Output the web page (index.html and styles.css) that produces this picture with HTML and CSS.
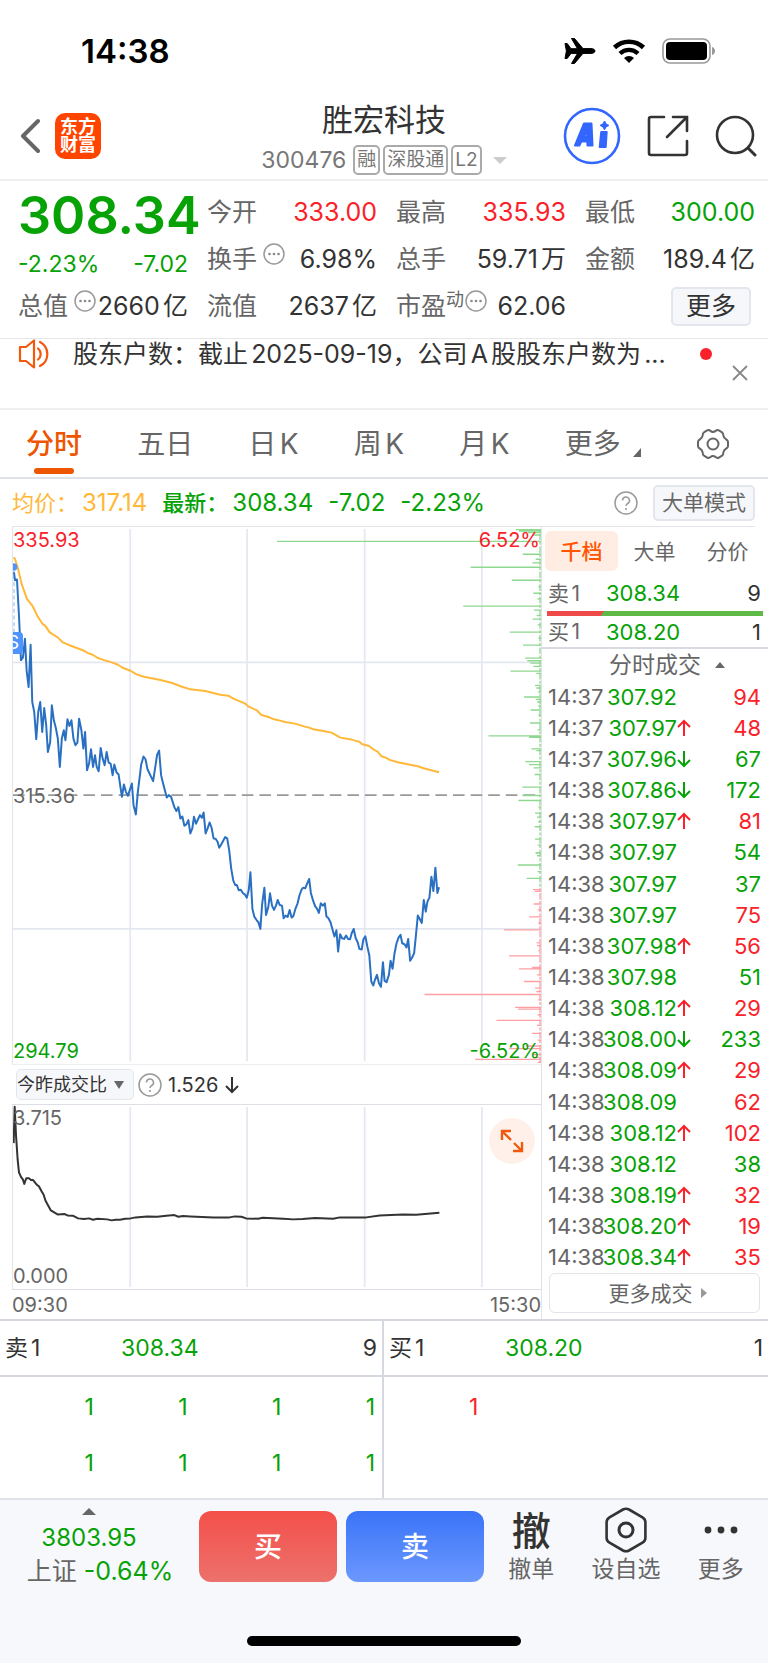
FILE: index.html
```html
<!DOCTYPE html>
<html lang="zh-CN">
<head>
  <meta charset="utf-8">
  <meta name="viewport" content="width=device-width, initial-scale=1">
  <title>胜宏科技 300476</title>
  <link rel="stylesheet" href="styles.css">
</head>
<body>
  <!-- shared icons -->
  <svg class="defs" width="0" height="0">
    <symbol id="i-up" viewBox="0 0 14 18"><path d="M7 17V2M1 8L7 2l6 6" fill="none" stroke="currentColor" stroke-width="2"/></symbol>
    <symbol id="i-down" viewBox="0 0 14 18"><path d="M7 1v15M1 10l6 6 6-6" fill="none" stroke="currentColor" stroke-width="2"/></symbol>
    <symbol id="i-more" viewBox="0 0 22 22"><circle cx="11" cy="11" r="10" fill="none" stroke="#999" stroke-width="1.500"/><g fill="#888"><circle cx="6.500" cy="11" r="1.300"/><circle cx="11" cy="11" r="1.300"/><circle cx="15.500" cy="11" r="1.300"/></g></symbol>
    <symbol id="i-help" viewBox="0 0 24 24"><circle cx="12" cy="12" r="11" fill="none" stroke="#999" stroke-width="1.500"/><path d="M8.500 9.500a3.500 3.500 0 1 1 5.200 3c-1.200.7-1.700 1.200-1.700 2.500" fill="none" stroke="#999" stroke-width="1.500"/><circle cx="12" cy="18" r="1.100" fill="#999"/></symbol>
  </svg>

  <div class="status-bar">
    <div class="time">14:38</div>
    <div class="status-icons">
      <svg width="32" height="28" viewBox="0 0 32 28"><path d="M1 6.500h2.200l3.800 5.200h6.500L7.500 1.500h3L19 11.600h8c2.500 0 4 1.200 4 2.400s-1.500 2.400-4 2.400h-8L10.500 26.500h-3l6-10.100H7l-3.800 5.100H1l1.400-7.500z" stroke="#000"/></svg>
      <svg width="34" height="26" viewBox="0 0 34 26"><path d="M2.500 9.500a21 21 0 0 1 29 0" fill="none" stroke="#000" stroke-width="4.600"/><path d="M8 15.500a13 13 0 0 1 18 0" fill="none" stroke="#000" stroke-width="4.400"/><path d="M17 25l-5-5a7 7 0 0 1 10 0z"/></svg>
      <svg class="battery" width="54" height="26" viewBox="0 0 54 26"><rect x="1" y="1" width="47" height="24" rx="7" fill="none" stroke="#999" stroke-width="1.600"/><rect x="4" y="4" width="41" height="18" rx="4"/><path d="M50 9c4 1 4 7 0 8z" fill="#999"/></svg>
    </div>
  </div>

  <header class="header">
    <div class="header-left">
      <button class="icon-btn" aria-label="返回">
        <svg width="20" height="36" viewBox="0 0 20 36"><path d="M18 3L3 18l15 15" fill="none" stroke="#666" stroke-width="4" stroke-linecap="round" stroke-linejoin="round"/></svg>
      </button>
      <a class="brand" href="#">东方<br>财富</a>
    </div>
    <div class="header-title">
      <h1>胜宏科技</h1>
      <div class="code-row">
        <span class="code">300476</span>
        <span class="tag">融</span>
        <span class="tag">深股通</span>
        <span class="tag">L2</span>
        <span class="caret"></span>
      </div>
    </div>
    <div class="header-right">
      <button class="icon-btn" aria-label="Ai">
        <svg width="58" height="58" viewBox="0 0 58 58">
          <circle cx="29" cy="29" r="27" fill="none" stroke="#3366ff" stroke-width="2.600"/>
          <path fill="#3366ff" fill-rule="evenodd" stroke="#3366ff" stroke-width="2" stroke-linejoin="round" d="M21 16.500h7.500l1 22h-5l-.2-4h-6.100l-1.800 4h-4.400zM20.800 29.500h3.600l-.3-6zM38.200 25h5.500l-1 15h-6zM41.500 15l1.100 2.300 2.400 1.100-2.400 1.100-1.100 2.400-1.200-2.400-2.300-1.100 2.300-1.100z"/>
        </svg>
      </button>
      <button class="icon-btn" aria-label="分享">
        <svg width="42" height="42" viewBox="0 0 42 42"><path d="M17 2H4a2 2 0 0 0-2 2v34a2 2 0 0 0 2 2h34a2 2 0 0 0 2-2V26M26 2h14v14M39 3L20 22" fill="none" stroke="#333" stroke-width="2.600" stroke-linecap="round"/></svg>
      </button>
      <button class="icon-btn" aria-label="搜索">
        <svg width="42" height="42" viewBox="0 0 42 42"><circle cx="20" cy="20" r="18" fill="none" stroke="#333" stroke-width="2.600"/><path d="M33 33l7 7" stroke="#333" stroke-width="3" stroke-linecap="round"/></svg>
      </button>
    </div>
  </header>

  <section class="quote">
    <div class="quote-main">
      <div class="price green">308.34</div>
      <div class="change green"><span>-2.23%</span><span>-7.02</span></div>
      <div class="stat"><span class="label">总值<svg class="more-dot"><use href="#i-more"/></svg></span><span>2660亿</span></div>
    </div>
    <div class="quote-col">
      <div class="stat"><span class="label">今开</span><span class="red">333.00</span></div>
      <div class="stat"><span class="label">换手<svg class="more-dot"><use href="#i-more"/></svg></span><span>6.98%</span></div>
      <div class="stat"><span class="label">流值</span><span>2637亿</span></div>
    </div>
    <div class="quote-col">
      <div class="stat"><span class="label">最高</span><span class="red">335.93</span></div>
      <div class="stat"><span class="label">总手</span><span>59.71万</span></div>
      <div class="stat"><span class="label">市盈<small>动</small><svg class="more-dot tight"><use href="#i-more"/></svg></span><span>62.06</span></div>
    </div>
    <div class="quote-col">
      <div class="stat"><span class="label">最低</span><span class="green">300.00</span></div>
      <div class="stat"><span class="label">金额</span><span>189.4亿</span></div>
      <div class="stat end"><button class="soft-btn more-btn">更多</button></div>
    </div>
  </section>

  <section class="news">
    <svg class="speaker" width="34" height="30" viewBox="0 0 34 30"><g fill="none" stroke="#f2590d" stroke-width="2.200" stroke-linejoin="round" stroke-linecap="round"><path d="M2 8h6l8-6.500v27L8 22H2z"/><path d="M20 9.500a7 7 0 0 1 0 11M22 3a13.500 13.500 0 0 1 0 24"/></g></svg>
    <a class="news-text" href="#">股东户数：截止2025-09-19，公司A股股东户数为...</a>
    <span class="dot"></span>
    <button class="icon-btn close" aria-label="关闭">
      <svg width="16" height="16" viewBox="0 0 16 16"><path d="M1 1l14 14M15 1L1 15" stroke="#888" stroke-width="1.800"/></svg>
    </button>
  </section>

  <nav class="tabs">
    <a class="active" href="#">分时</a>
    <a href="#">五日</a>
    <a href="#">日K</a>
    <a href="#">周K</a>
    <a href="#">月K</a>
    <a class="has-corner" href="#">更多</a>
    <button class="icon-btn" aria-label="设置">
      <svg width="34" height="32" viewBox="0 0 34 32"><g fill="none" stroke="#666" stroke-width="2"><path d="M11 2.500q2-1 3.300.4 2.700 2 5.400 0Q21 1.500 23 2.500l3 1.800q1.500 1 1.300 3 .5 3 3 4.200 1.700.8 1.700 2.500v4q0 1.700-1.700 2.500-2.500 1.200-3 4.200.2 2-1.300 3l-3 1.800q-2 1-3.300-.4-2.700-2-5.400 0-1.300 1.400-3.300.4l-3-1.800q-1.500-1-1.300-3-.5-3-3-4.200Q2 19.700 2 18v-4q0-1.700 1.700-2.500 2.500-1.200 3-4.200-.2-2 1.300-3z"/><circle cx="17" cy="16" r="5.500"/></g></svg>
    </button>
  </nav>

  <div class="summary">
    <span class="avg">均价：<span class="num">317.14</span></span>
    <span class="green"><b>最新：</b><span class="num">308.34</span></span>
    <span class="num green">-7.02</span>
    <span class="num green">-2.23%</span>
    <button class="icon-btn help" aria-label="帮助"><svg width="24" height="24"><use href="#i-help"/></svg></button>
    <button class="soft-btn mode-btn">大单模式</button>
  </div>

  <main class="market">
    <div class="charts">
      <div class="chart price-chart">
        <svg viewBox="36 24 1590 1614" preserveAspectRatio="none">
          <path class="grid" d="M389 30V1630M741 30V1630M1095 30V1630M1448 30V1630M36 431H1626M36 1232H1626"/>
          <path class="mid" d="M36 830H1626"/>
          <!-- resting sell orders -->
          <g transform="translate(1320 0)">
            <path class="asks" d="M230 32H306M240 36H306M265 41H306M280 48H306M-489 67H306M251 106H306M290 121H306M280 132H306M94 145H306M218 184H306M298 203H306M283 223H306M295 240H306M72 262H306M285 274H306M293 290H306M281 301H306M296 318H306M212 340H306M298 358H306M252 379H306M258 418H306M265 426H306M274 433H306M283 443H306M214 457H306M292 464H306M288 500H306M292 508H306M298 520H306M255 535H306M290 542H306M294 550H306M298 562H306M275 574H306M298 590H306M273 613H306M296 634H306M148 652H306M270 656H306M277 691H306M292 696H306M259 729H306M270 738H306M284 748H306M287 768H306M250 806H306M250 831H306M238 846H306M298 866H306M288 884H306M294 896H306M298 910H306M287 925H306M288 962H306M296 980H306M290 1003H306M294 1012H306"/>
            <path class="asks edge" d="M303 30V1020"/>
          </g>
          <!-- resting buy orders -->
          <g transform="translate(1200 960)">
            <path class="asks" d="M410 43H426M356 80H426M416 100H426M383 120H426"/>
            <path class="asks edge" d="M423 60V145"/>
            <path class="bids" d="M402 154H426M408 159H426M404 197H426M416 215H426M390 236H426M418 255H426M315 275H426M413 314H426M414 322H426M418 338H426M330 353H426M399 388H426M360 392H426M414 410H426M375 430H426M408 450H426M412 460H426M75 469H426M418 485H426M348 508H426M357 513H426M416 530H426M292 547H426M414 562H426M399 586H426M416 606H426M380 624H426M330 632H426M400 650H426M410 658H426M228 664H426M416 673H426"/>
            <path class="bids edge" d="M423 150V675"/>
          </g>
          <polyline class="avg-line" points="38,115 42,120 50,145 62,195 78,240 94,260 110,292 124,314 134,322 146,340 158,348 170,355 186,371 210,381 250,396 262,403 276,408 290,417 310,424 334,431 352,438 366,447 390,456 408,467 430,474 480,484 515,493 545,504 570,512 615,517 660,528 684,531 700,540 734,554 746,564 770,575 784,589 808,596 822,602 840,606 855,610 885,615 915,624 928,627 940,632 970,637 995,642 1022,657 1055,663 1078,669 1088,677 1108,682 1122,693 1134,699 1145,713 1160,718 1170,724 1198,732 1255,743 1275,750 1319,761"/>
          <path class="marker-line" d="M39 150V340"/>
          <circle cx="38" cy="144" r="11" fill="#4d94ff"/>
          <polyline class="price-line" points="39,160 42,184 48,182 54,290 60,424 66,416 72,360 77,455 83,505 89,378 94,550 100,580 106,662 112,580 118,550 124,640 130,568 136,620 141,700 148,670 153,560 159,605 165,628 171,660 177,745 183,660 189,635 194,665 200,602 206,622 212,605 218,660 224,680 230,672 235,600 242,635 248,690 253,640 259,755 265,735 271,692 277,745 283,710 288,745 294,758 300,688 306,720 312,740 318,700 324,732 330,735 336,770 341,738 348,762 354,768 364,835 370,798 376,820 382,832 394,795 399,860 406,888 412,820 422,738 429,714 435,722 441,752 458,788 463,755 470,708 476,696 482,770 488,795 499,837 505,830 512,835 522,866 528,878 534,866 540,900 546,894 552,922 558,918 564,905 570,945 576,930 581,895 587,916 599,890 605,898 610,882 616,945 622,930 628,912 634,928 640,960 646,961 652,970 657,988 663,978 675,956 681,960 687,995 693,1050 699,1085 705,1100 710,1100 716,1116 722,1114 728,1124 734,1128 740,1138 746,1115 751,1062 757,1172 763,1196 770,1206 775,1212 781,1232 786,1160 793,1108 798,1190 805,1165 810,1125 816,1162 822,1175 828,1162 833,1145 839,1160 846,1162 851,1200 857,1192 863,1196 869,1175 875,1198 880,1194 887,1170 893,1155 899,1130 905,1114 910,1108 916,1110 922,1095 928,1082 933,1124 940,1148 946,1164 951,1170 957,1184 963,1155 969,1162 975,1155 980,1195 986,1200 992,1212 1004,1255 1010,1236 1015,1300 1021,1248 1027,1260 1033,1262 1039,1252 1045,1262 1051,1263 1056,1245 1062,1232 1068,1260 1074,1272 1079,1292 1086,1294 1091,1264 1097,1254 1103,1285 1109,1312 1115,1390 1121,1402 1126,1385 1132,1370 1138,1395 1144,1406 1150,1332 1155,1388 1161,1392 1168,1370 1173,1328 1179,1352 1185,1305 1191,1275 1197,1258 1203,1250 1208,1275 1215,1278 1221,1288 1226,1262 1232,1328 1238,1318 1244,1305 1249,1255 1255,1192 1261,1202 1267,1214 1273,1145 1279,1180 1284,1150 1290,1138 1296,1075 1302,1118 1308,1048 1314,1124 1319,1107"/>
        </svg>
        <span class="trade-mark">S</span>
        <span class="axis top left red">335.93</span>
        <span class="axis top right red">6.52%</span>
        <span class="axis middle left">315.36</span>
        <span class="axis bottom left green">294.79</span>
        <span class="axis bottom right green">-6.52%</span>
      </div>

      <div class="indicator">
        <button class="soft-btn indicator-btn">今昨成交比<span class="tri-down"></span></button>
        <button class="icon-btn" aria-label="帮助"><svg width="24" height="24"><use href="#i-help"/></svg></button>
        <span class="indicator-value">1.526 <svg class="arrow"><use href="#i-down"/></svg></span>
      </div>

      <div class="chart ratio-chart">
        <svg viewBox="36 195 1590 555" preserveAspectRatio="none">
          <path class="grid" d="M389 201V744M741 201V744M1095 201V744M1448 201V744"/>
          <polyline class="ratio-line" points="38,310 41,200 45,285 50,360 54,398 60,412 66,420 70,433 76,416 84,416 90,421 96,421 108,436 114,440 122,455 128,465 134,484 150,513 160,519 170,525 192,524 200,528 216,529 232,537 250,539 265,537 277,541 290,538 320,540 333,543 345,541 358,541 374,538 390,537 405,534 440,531 470,532 498,529 522,527 534,532 548,530 570,531 640,534 688,534 704,531 724,532 738,537 774,538 788,535 850,538 880,540 908,539 946,536 1000,538 1020,534 1100,534 1140,528 1210,525 1250,526 1320,520"/>
        </svg>
        <span class="axis top left">3.715</span>
        <span class="axis bottom left">0.000</span>
        <button class="icon-btn expand" aria-label="全屏">
          <svg width="24" height="24" viewBox="0 0 24 24"><path d="M2 11V2h9M2 2l9 9M22 13v9h-9M22 22l-8-8" fill="none" stroke="#f2590d" stroke-width="2.400"/></svg>
        </button>
      </div>
      <div class="hours"><span>09:30</span><span>15:30</span></div>
    </div>

    <aside class="tape">
      <div class="tape-tabs">
        <button class="active">千档</button>
        <button>大单</button>
        <button>分价</button>
      </div>
      <div class="level"><span>卖1</span><b class="green">308.34</b><i>9</i></div>
      <div class="ratio-bar"></div>
      <div class="level"><span>买1</span><b class="green">308.20</b><i>1</i></div>
      <button class="tape-title">分时成交<span class="tri-up"></span></button>
      <table class="trades">
        <tr><td>14:37</td><td>307.92</td><td></td><td class="red">94</td></tr>
        <tr><td>14:37</td><td>307.97</td><td class="red"><svg class="arrow"><use href="#i-up"/></svg></td><td class="red">48</td></tr>
        <tr><td>14:37</td><td>307.96</td><td class="green"><svg class="arrow"><use href="#i-down"/></svg></td><td class="green">67</td></tr>
        <tr><td>14:38</td><td>307.86</td><td class="green"><svg class="arrow"><use href="#i-down"/></svg></td><td class="green">172</td></tr>
        <tr><td>14:38</td><td>307.97</td><td class="red"><svg class="arrow"><use href="#i-up"/></svg></td><td class="red">81</td></tr>
        <tr><td>14:38</td><td>307.97</td><td></td><td class="green">54</td></tr>
        <tr><td>14:38</td><td>307.97</td><td></td><td class="green">37</td></tr>
        <tr><td>14:38</td><td>307.97</td><td></td><td class="red">75</td></tr>
        <tr><td>14:38</td><td>307.98</td><td class="red"><svg class="arrow"><use href="#i-up"/></svg></td><td class="red">56</td></tr>
        <tr><td>14:38</td><td>307.98</td><td></td><td class="green">51</td></tr>
        <tr><td>14:38</td><td>308.12</td><td class="red"><svg class="arrow"><use href="#i-up"/></svg></td><td class="red">29</td></tr>
        <tr><td>14:38</td><td>308.00</td><td class="green"><svg class="arrow"><use href="#i-down"/></svg></td><td class="green">233</td></tr>
        <tr><td>14:38</td><td>308.09</td><td class="red"><svg class="arrow"><use href="#i-up"/></svg></td><td class="red">29</td></tr>
        <tr><td>14:38</td><td>308.09</td><td></td><td class="red">62</td></tr>
        <tr><td>14:38</td><td>308.12</td><td class="red"><svg class="arrow"><use href="#i-up"/></svg></td><td class="red">102</td></tr>
        <tr><td>14:38</td><td>308.12</td><td></td><td class="green">38</td></tr>
        <tr><td>14:38</td><td>308.19</td><td class="red"><svg class="arrow"><use href="#i-up"/></svg></td><td class="red">32</td></tr>
        <tr><td>14:38</td><td>308.20</td><td class="red"><svg class="arrow"><use href="#i-up"/></svg></td><td class="red">19</td></tr>
        <tr><td>14:38</td><td>308.34</td><td class="red"><svg class="arrow"><use href="#i-up"/></svg></td><td class="red">35</td></tr>
      </table>
      <button class="more-trades">更多成交<span class="tri-right"></span></button>
    </aside>
  </main>

  <section class="book">
    <div class="book-side">
      <div class="book-head"><span>卖1</span><span class="green">308.34</span><span>9</span></div>
      <div class="queue green">
        <span>1</span><span>1</span><span>1</span><span>1</span>
        <span>1</span><span>1</span><span>1</span><span>1</span>
      </div>
    </div>
    <div class="book-side">
      <div class="book-head"><span>买1</span><span class="green">308.20</span><span>1</span></div>
      <div class="queue red"><span>1</span></div>
    </div>
  </section>

  <footer class="bottom-bar">
    <div class="actions">
      <a class="index" href="#">
        <span class="tri-up"></span>
        <span class="index-value green">3803.95</span>
        <span class="index-change">上证 <span class="green">-0.64%</span></span>
      </a>
      <div class="trade-btns">
        <button class="buy">买</button>
        <button class="sell">卖</button>
      </div>
      <div class="shortcuts">
        <a href="#"><span class="glyph">撤</span>撤单</a>
        <a href="#">
          <span class="glyph"><svg width="44" height="46" viewBox="0 0 44 46"><g fill="none" stroke="#333"><path d="M19 2.500q3-1.600 6 0l13.500 7.800q2.900 1.700 2.900 5v15.400q0 3.300-2.900 5L25 43.500q-3 1.600-6 0L5.500 35.700q-2.900-1.700-2.900-5V15.300q0-3.300 2.900-5z" stroke-width="2.600"/><circle cx="22" cy="23" r="7" stroke-width="3"/></g></svg></span>设自选
        </a>
        <a href="#">
          <span class="glyph"><svg width="34" height="8" viewBox="0 0 34 8"><g fill="#333"><circle cx="4" cy="4" r="3.400"/><circle cx="17" cy="4" r="3.400"/><circle cx="30" cy="4" r="3.400"/></g></svg></span>更多
        </a>
      </div>
    </div>
    <div class="home-indicator"></div>
  </footer>
</body>
</html>
```
FILE: styles.css
```css
* {
  box-sizing: border-box;
}
body {
  margin: 0;
  background: #fff;
  color: #333;
  font-family: Inter, "Noto Sans CJK SC", sans-serif;
  font-size: 22px;
  line-height: 1;
  text-autospace: normal;
}
a {
  color: inherit;
  text-decoration: none;
}
button {
  font: inherit;
  color: inherit;
  background: none;
  border: none;
  padding: 0;
  cursor: pointer;
}
svg {
  display: block;
}
.defs {
  position: absolute;
}
.red {
  color: #f9222a;
}
.green {
  color: #06a206;
}
.icon-btn {
  display: flex;
  align-items: center;
  justify-content: center;
}
.soft-btn {
  border: 2px solid #e4e6ee;
  border-radius: 5px;
  background: #f6f7fa;
}

/* status bar */
.status-bar {
  display: flex;
  justify-content: space-between;
  align-items: center;
  height: 102px;
  padding: 0 52px 0 81px;
  color: #000;
}
.time {
  font-size: 33px;
  font-weight: 600;
}
.status-icons {
  display: flex;
  align-items: center;
  gap: 16px;
}

/* header */
.header {
  display: grid;
  grid-template-columns: 1fr auto 1fr;
  height: 79px;
  padding: 0 11px;
  border-bottom: 2px solid #efefef;
}
.header-left,
.header-right {
  display: flex;
  align-items: center;
  padding-bottom: 10px;
}
.header-left {
  gap: 15px;
  padding-left: 9px;
}
.header-right {
  justify-content: flex-end;
  gap: 26px;
}
.brand {
  padding: 5px;
  border-radius: 10px;
  background: #ff4400;
  color: #fff;
  font-size: 18px;
  font-weight: 700;
  line-height: 18px;
}
.header-title {
  text-align: center;
}
.header-title h1 {
  margin: 0 0 8px;
  font-size: 31px;
  font-weight: 400;
  line-height: 35px;
}
.code-row {
  display: flex;
  align-items: center;
  justify-content: center;
  gap: 3px;
  color: #777;
}
.code {
  margin-right: 4px;
  font-size: 23px;
}
.tag {
  padding: 0 2px;
  border: 2px solid #aaa;
  border-radius: 5px;
  font-size: 19px;
  line-height: 26px;
}
.caret {
  margin-left: 8px;
  border: 7px solid transparent;
  border-top-color: #ccc;
  border-bottom: none;
}

/* quote */
.quote {
  display: grid;
  grid-template-columns: repeat(4, minmax(0, 1fr));
  gap: 19px;
  height: 158px;
  padding: 8px 13px 0 18px;
  border-bottom: 1px solid #e6e6e6;
  font-size: 25px;
}
.stat {
  display: flex;
  justify-content: space-between;
  align-items: center;
  height: 47px;
  white-space: nowrap;
}
.stat.end {
  justify-content: flex-end;
}
.label {
  display: flex;
  color: #666;
}
.label small {
  font-size: 18px;
  line-height: 12px;
}
.more-dot {
  width: 22px;
  height: 22px;
  margin: -4px 0 0 6px;
}
.more-dot.tight {
  margin-left: 1px;
}
.price {
  height: 56px;
  font-size: 52px;
  font-weight: 600;
  line-height: 54px;
}
.change {
  display: flex;
  justify-content: space-between;
  align-items: center;
  height: 38px;
  font-size: 23px;
}
.more-btn {
  width: 80px;
  height: 39px;
  margin-right: 4px;
}

/* announcement */
.news {
  display: flex;
  align-items: flex-start;
  height: 71px;
  padding: 0 20px 0 18px;
  border-bottom: 2px solid #efefef;
}
.news-text {
  flex: 1;
  margin-left: 21px;
  font-size: 25px;
  line-height: 30px;
  white-space: nowrap;
}
.dot {
  width: 12px;
  height: 12px;
  margin: 9px 20px 0 0;
  border-radius: 50%;
  background: #f9222a;
}
.close {
  margin-top: 26px;
}

/* period tabs */
.tabs {
  display: flex;
  justify-content: space-between;
  align-items: center;
  height: 69px;
  padding: 0 38px 0 26px;
  border-bottom: 2px solid #dfe1e8;
  color: #666;
  font-size: 28px;
}
.tabs a {
  position: relative;
  line-height: 66px;
}
.tabs .active {
  color: #ee5500;
  font-weight: 500;
}
.tabs .active::after {
  content: "";
  position: absolute;
  left: 50%;
  bottom: 3px;
  width: 40px;
  height: 6px;
  margin-left: -20px;
  border-radius: 3px;
  background: #ee5500;
}
.tabs .has-corner {
  padding-right: 20px;
}
.has-corner::after {
  content: "";
  position: absolute;
  right: 0;
  bottom: 20px;
  border-left: 8px solid transparent;
  border-bottom: 9px solid #666;
}

/* summary line */
.summary {
  display: flex;
  align-items: center;
  gap: 15px;
  height: 48px;
  margin: 0 13px 0 12px;
  border-bottom: 1px solid #e2e4e8;
}
.avg {
  color: #ffb838;
}
.summary b {
  font-weight: 500;
}
.num {
  font-size: 24px;
}
span > .num {
  margin-left: 4px;
}
.help {
  margin-left: auto;
}
.mode-btn {
  width: 102px;
  height: 36px;
  color: #666;
  font-size: 21px;
}

/* charts */
.market {
  display: grid;
  grid-template-columns: minmax(0, 1fr) 226px;
  border-bottom: 2px solid #d6d8e0;
}
.charts {
  margin-left: 12px;
  border-right: 1px solid #e0e2e8;
}
.chart {
  position: relative;
  overflow: hidden;
  border-left: 1px solid #e2e4ec;
}
.chart > svg {
  width: 100%;
  height: 100%;
}
.price-chart {
  height: 538px;
  border-bottom: 1px solid #eceef2;
}
.ratio-chart {
  height: 186px;
  border-top: 1px solid #dddfe6;
  border-bottom: 1px solid #dddfe6;
}
.grid {
  fill: none;
  stroke: #e4e7ef;
  stroke-width: 5;
}
.mid {
  stroke: #999;
  stroke-width: 5;
  stroke-dasharray: 35 18;
}
.asks {
  stroke: #8fd88f;
  stroke-width: 4;
}
.bids {
  stroke: #ff9fa3;
  stroke-width: 4;
}
.edge {
  stroke-dasharray: 9 5 20 4;
}
.avg-line,
.price-line,
.ratio-line {
  fill: none;
  stroke: #ffb838;
  stroke-width: 6;
  stroke-linejoin: round;
}
.price-line {
  stroke: #2a70c2;
}
.ratio-line {
  stroke: #333;
}
.marker-line {
  stroke: #a5c8ff;
  stroke-width: 4;
  stroke-dasharray: 12 8;
}
.trade-mark {
  position: absolute;
  left: -10px;
  top: 105px;
  width: 20px;
  border-radius: 4px;
  background: #4d94ff;
  color: #fff;
  font-size: 19px;
  line-height: 22px;
  text-align: center;
}
.axis {
  position: absolute;
  color: #666;
  font-size: 20px;
}
.axis.red {
  color: #f9222a;
}
.axis.green {
  color: #06a206;
}
.axis.left {
  left: 0;
}
.axis.right {
  right: 1px;
}
.axis.top {
  top: 3px;
}
.axis.middle {
  top: 50%;
  margin-top: -10px;
}
.axis.bottom {
  bottom: 3px;
}
.indicator {
  display: flex;
  align-items: center;
  gap: 4px;
  height: 39px;
  padding-left: 4px;
}
.indicator-btn {
  display: flex;
  align-items: center;
  justify-content: space-between;
  width: 118px;
  height: 31px;
  padding: 0 9px 0 0;
  border-width: 1px;
  font-size: 18px;
  white-space: nowrap;
}
.indicator-value {
  display: flex;
  align-items: center;
  gap: 7px;
  margin-left: 2px;
  font-size: 20px;
}
.arrow {
  width: 14px;
  height: 18px;
}
.tri-down {
  border: 5px solid transparent;
  border-top: 8px solid #666;
  border-bottom: none;
}
.tri-up {
  border: 5px solid transparent;
  border-bottom: 6px solid #666;
  border-top: none;
}
.tri-right {
  border: 5px solid transparent;
  border-left: 6px solid #999;
  border-right: none;
}
.expand {
  position: absolute;
  right: 6px;
  top: 13px;
  width: 46px;
  height: 46px;
  border-radius: 50%;
  background: #fff1ea;
}
.hours {
  display: flex;
  justify-content: space-between;
  align-items: center;
  height: 29px;
  color: #666;
  font-size: 20px;
}

/* tape */
.tape {
  display: flex;
  flex-direction: column;
  padding: 4px 0 6px;
}
.tape-tabs {
  display: grid;
  grid-template-columns: repeat(3, 1fr);
  margin: 0 4px 4px 3px;
  color: #666;
  font-size: 21px;
}
.tape-tabs button {
  height: 40px;
  border-radius: 6px;
}
.tape-tabs .active {
  background: #ffede4;
  color: #ff5500;
  font-weight: 500;
}
.level {
  display: grid;
  grid-template-columns: 58px 1fr auto;
  align-items: center;
  height: 36px;
  padding: 0 7px 0 6px;
}
.ratio-bar + .level {
  height: 31px;
}
.level span {
  color: #666;
  font-size: 21px;
}
.level b,
.level i {
  font-weight: 400;
  font-style: normal;
}
.ratio-bar {
  height: 5px;
  margin: 0 5px;
  background: linear-gradient(120deg, #ee4a4a 26%, #5dba47 26%);
}
.tape-title {
  display: flex;
  align-items: center;
  justify-content: center;
  gap: 14px;
  height: 34px;
  padding-left: 24px;
  border-top: 2px solid #d8dce2;
  color: #666;
  font-size: 23px;
}
.trades {
  table-layout: fixed;
  width: 100%;
  height: 592px;
  padding: 0 7px 0 6px;
  border-spacing: 0;
}
.trades td {
  padding: 0;
  text-align: right;
  white-space: nowrap;
}
.trades td:nth-child(1) {
  width: 52px;
  color: #666;
  text-align: left;
}
.trades td:nth-child(2) {
  width: 77px;
  color: #06a206;
}
.trades td:nth-child(3) {
  width: 15px;
}
.more-trades {
  display: flex;
  align-items: center;
  justify-content: center;
  gap: 8px;
  height: 40px;
  margin: 0 8px 0 7px;
  padding-left: 6px;
  border: 1px solid #e4e4e8;
  border-radius: 6px;
  color: #666;
  font-size: 21px;
}

/* order book */
.book {
  display: grid;
  grid-template-columns: 1fr 1fr;
  font-size: 23px;
}
.book-side:first-child {
  border-right: 2px solid #d6d8e0;
}
.book-head {
  display: grid;
  grid-template-columns: 116px 1fr auto;
  align-items: center;
  height: 56px;
  padding: 0 5px;
  border-bottom: 2px solid #d6d8e0;
}
.queue {
  display: grid;
  grid-template-columns: repeat(4, 1fr);
  grid-auto-rows: 56px;
  align-items: center;
  min-height: 121px;
  padding: 2px 7px 0 0;
  text-align: right;
}

/* bottom bar */
.bottom-bar {
  padding: 11px 0 17px;
  border-top: 2px solid #dfe1e6;
  background: #f7f8fb;
}
.actions {
  display: grid;
  grid-template-columns: 199fr 285fr 284fr;
  height: 125px;
}
.index {
  display: flex;
  flex-direction: column;
  align-items: center;
  padding-right: 21px;
  white-space: nowrap;
}
.index .tri-up {
  border-width: 0 7px 7px;
  margin-top: -3px;
}
.index-value {
  margin-top: 11px;
  font-size: 24px;
}
.index-change {
  margin: 9px 0 0 22px;
  color: #666;
  font-size: 25px;
}
.trade-btns {
  display: grid;
  grid-template-columns: 1fr 1fr;
  gap: 9px;
  height: 71px;
}
.trade-btns button {
  border-radius: 12px;
  color: #fff;
  font-size: 28px;
  font-weight: 500;
}
.buy {
  background: linear-gradient(#f4504a, #ec716c);
}
.sell {
  background: linear-gradient(#3a74f8, #6c98fe);
}
.shortcuts {
  display: grid;
  grid-template-columns: repeat(3, 1fr);
  color: #666;
  font-size: 23px;
  text-align: center;
}
.glyph {
  display: flex;
  align-items: center;
  justify-content: center;
  height: 38px;
  margin-bottom: 9px;
  color: #333;
  font-size: 39px;
  font-weight: 500;
}
.home-indicator {
  width: 274px;
  height: 10px;
  margin: 0 auto;
  border-radius: 5px;
  background: #000;
}
```
